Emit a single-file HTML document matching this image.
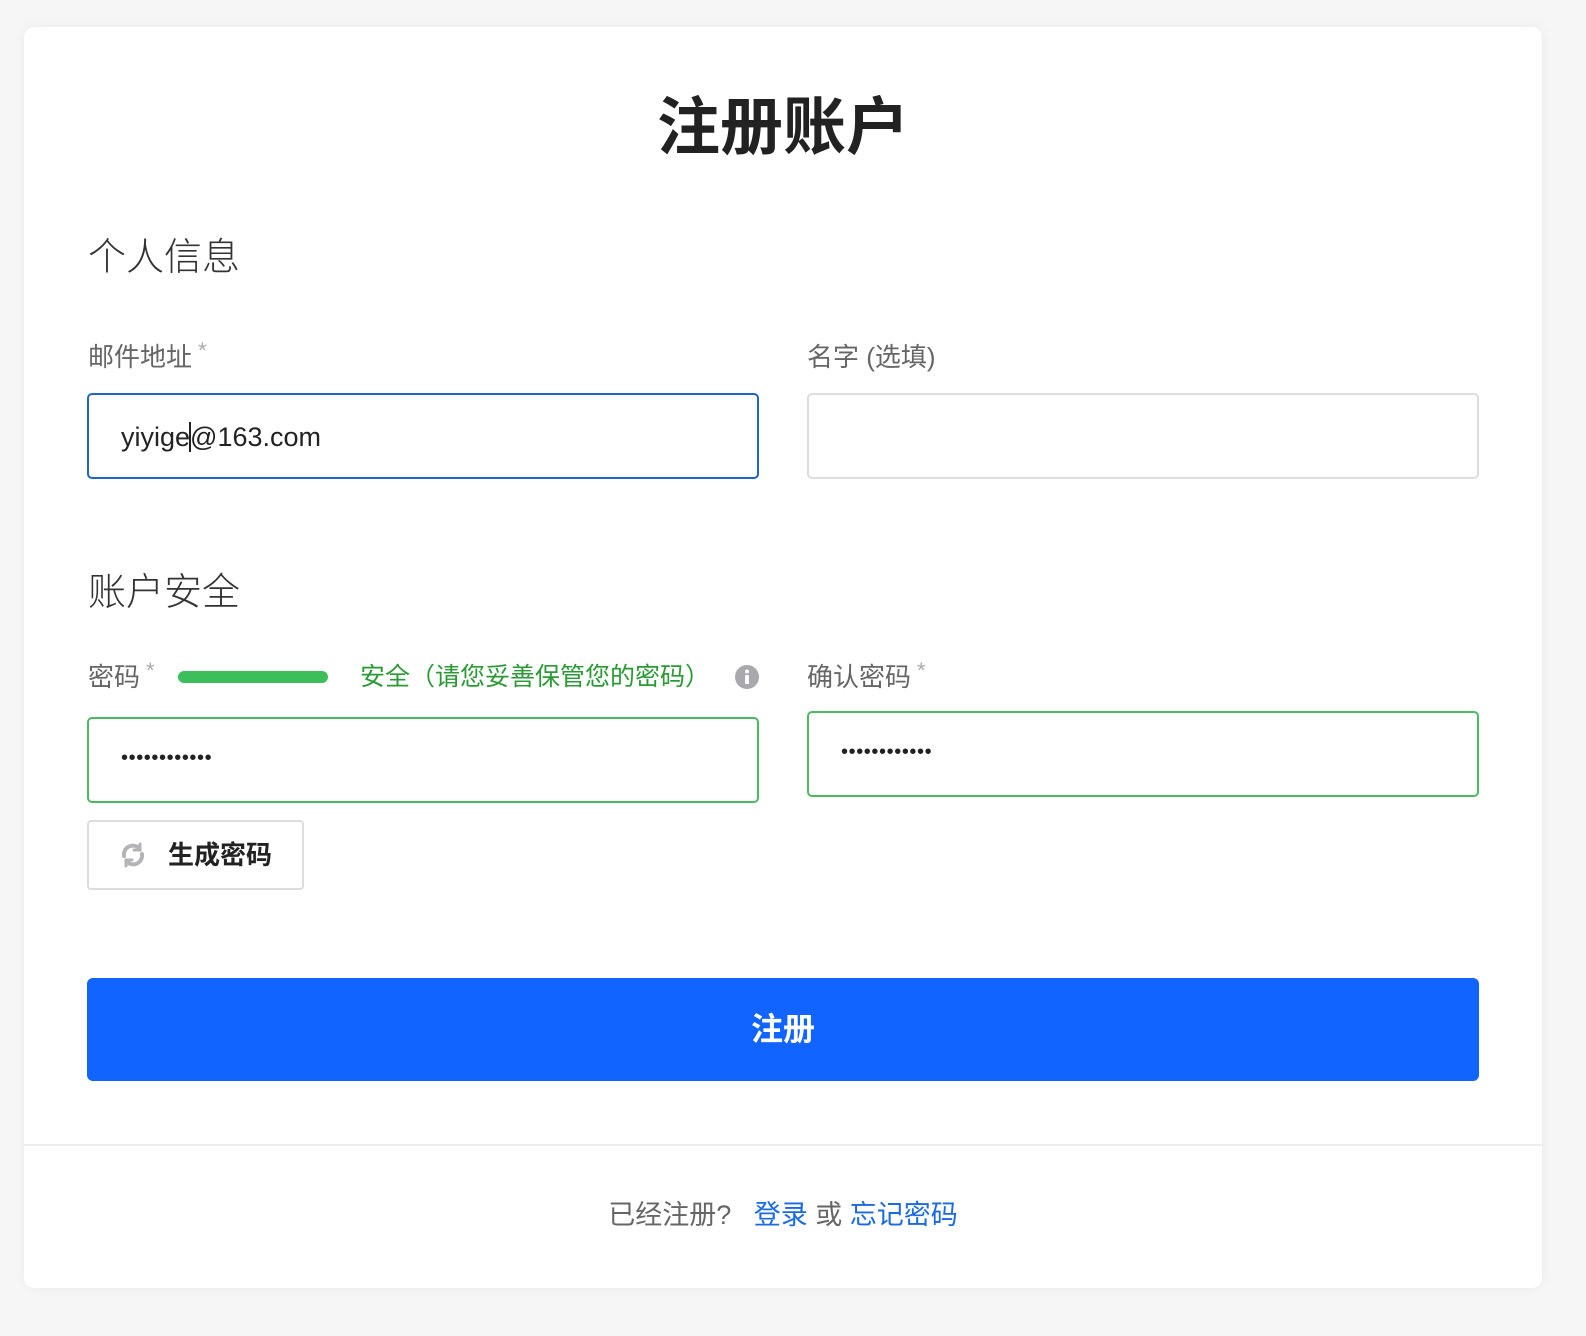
<!DOCTYPE html>
<html><head><meta charset="utf-8"><style>
*{box-sizing:border-box;margin:0;padding:0}
body{width:1586px;height:1336px;background:#f6f6f6;font-family:"Liberation Sans","Noto Sans CJK SC",sans-serif;position:relative;overflow:hidden}
.card{position:absolute;left:24px;top:27px;width:1518px;height:1261px;background:#fff;border-radius:10px;box-shadow:0 0 12px rgba(0,0,0,0.05)}
.a{position:absolute;white-space:nowrap}
.lbl{font-size:26px;color:#666;line-height:30px}
.star{color:#aaa;font-size:22px;vertical-align:top;position:relative;top:-6px;margin-left:6px}
.inp{position:absolute;border:2px solid #ddd;border-radius:5px;background:#fff}
.sec{font-size:38px;color:#333;font-weight:300;line-height:44px}
.dots{font-size:20px;letter-spacing:0.6px;color:#222;font-weight:normal;line-height:40px}
</style></head><body>
<div class="card"></div>
<div class="a" style="left:0;width:1566px;top:90px;text-align:center;font-size:63px;font-weight:bold;color:#222;line-height:76px">注册账户</div>
<div class="a sec" style="left:88px;top:236px">个人信息</div>
<div class="a lbl" style="left:88px;top:342px">邮件地址<span class="star">*</span></div>
<div class="a lbl" style="left:807px;top:342px">名字 (选填)</div>
<div class="inp" style="left:87px;top:393px;width:672px;height:86px;border-color:#1f63d0"></div>
<div class="a" style="left:121px;top:421px;font-size:27px;color:#222;line-height:32px">yiyige<span style="border-left:2px solid #222;margin:0 -1px"></span>@163.com</div>
<div class="inp" style="left:807px;top:393px;width:672px;height:86px"></div>
<div class="a sec" style="left:88px;top:571px">账户安全</div>
<div class="a lbl" style="left:88px;top:662px">密码<span class="star">*</span></div>
<div class="a" style="left:178px;top:671px;width:150px;height:12px;border-radius:6px;background:#3cbf5b"></div>
<div class="a" style="left:360px;top:662px;font-size:25px;color:#2a9a35;line-height:30px">安全（请您妥善保管您的密码）</div>
<svg class="a" style="left:735px;top:665px" width="24" height="24" viewBox="0 0 24 24"><circle cx="12" cy="12" r="12" fill="#a8a8ad"/><circle cx="12" cy="6.5" r="2" fill="#fff"/><rect x="10" y="10" width="4" height="9" rx="1" fill="#fff"/></svg>
<div class="a lbl" style="left:807px;top:662px">确认密码<span class="star">*</span></div>
<div class="inp" style="left:87px;top:717px;width:672px;height:86px;border-color:#4bbb61"></div>
<div class="a dots" style="left:121px;top:738px">••••••••••••</div>
<div class="inp" style="left:807px;top:711px;width:672px;height:86px;border-color:#4bbb61"></div>
<div class="a dots" style="left:841px;top:732px">••••••••••••</div>
<div class="inp" style="left:87px;top:820px;width:217px;height:70px;border-radius:4px"></div>
<svg class="a" style="left:119px;top:841px" width="28" height="28" viewBox="0 0 28 28" fill="none" stroke="#b4b4b8" stroke-width="4" stroke-linecap="round"><path d="M5 15a9 9 0 0 1 15-8"/><path d="M23 13a9 9 0 0 1-15 8"/><path d="M21 3v6h-6" stroke-width="3"/><path d="M7 25v-6h6" stroke-width="3"/></svg>
<div class="a" style="left:168px;top:839px;font-size:26px;color:#222;font-weight:bold;line-height:32px">生成密码</div>
<div class="a" style="left:87px;top:978px;width:1392px;height:103px;background:#1164ff;border-radius:6px;color:#fff;font-size:32px;font-weight:bold;text-align:center;line-height:103px">注册</div>
<div class="a" style="left:24px;top:1144px;width:1518px;height:2px;background:#eee"></div>
<div class="a" style="left:0;width:1566px;top:1199px;text-align:center;font-size:27px;color:#666;line-height:32px">已经注册?&nbsp;&nbsp; <span style="color:#1a6ae8">登录</span> 或 <span style="color:#1a6ae8">忘记密码</span></div>
</body></html>
